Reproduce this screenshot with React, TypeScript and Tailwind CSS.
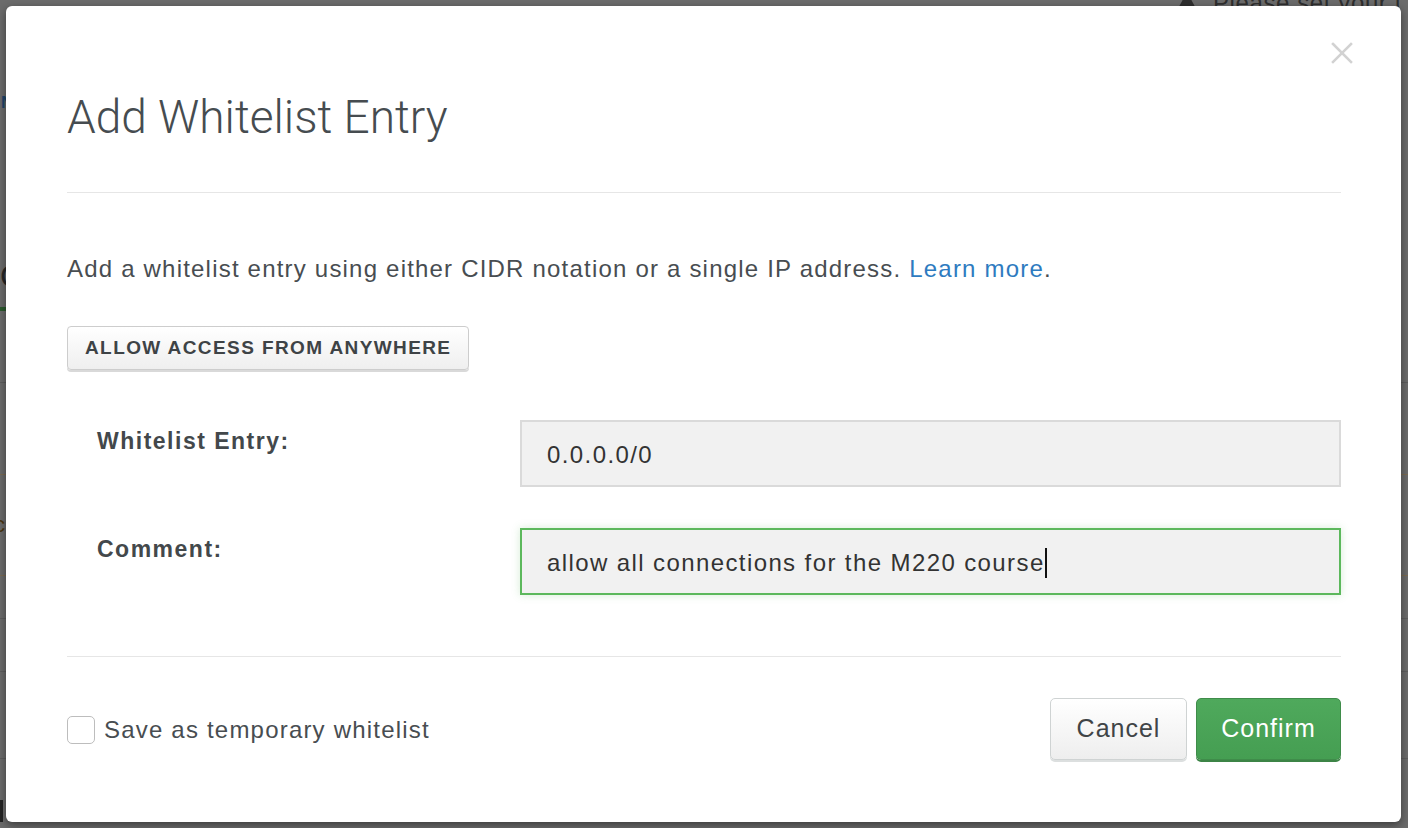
import { useState } from "react";

const font = "font-['Liberation_Sans','Helvetica_Neue',Arial,sans-serif]";

function CloseIcon() {
  return (
    <svg width="22" height="22" viewBox="0 0 22 22" fill="none" stroke="#d2d2d2" strokeWidth="2.6" strokeLinecap="square">
      <path d="M2 2 L20 20" />
      <path d="M20 2 L2 20" />
    </svg>
  );
}

function WarnIcon() {
  return (
    <svg width="24" height="22" viewBox="0 0 24 22" fill="#2e2e2e">
      <path d="M12 0 L24 22 L0 22 Z" />
    </svg>
  );
}

// dimmed page that sits behind the dialog; only its edges peek out
function BackdropPage() {
  const clip = "w-[6px] overflow-hidden whitespace-nowrap";
  return (
    <div className="flex w-full flex-col">
      <div className="flex h-[12px] items-start justify-end pr-[7px]">
        <div className="mt-[-8px]"><WarnIcon /></div>
        <span className="ml-[14px] mt-[-9px] w-[188px] overflow-hidden whitespace-nowrap text-[24px] leading-[24px] tracking-[0.6px] text-[#2e2e2e]">Please set your time zone</span>
      </div>
      <div className={`mt-[83px] h-[16px] pl-[1px] text-[17px] font-bold leading-[16px] text-[#1f446a] ${clip}`}>N</div>
      <div className={`mt-[150px] h-[30px] text-[32px] leading-[30px] text-[#262626] ${clip}`}>C</div>
      <div className="mt-[16px] h-[4px] w-[120px] bg-[#2c5a2e]" />
      <div className="mt-[71px] border-b border-[#5c5c5c]" />
      <div className="mt-[91px] h-[102px] border-y border-[#7a6a52] text-[22px] leading-[100px] text-[#4a3510]">
        <div className={clip}><span className="-ml-[6px]">c</span></div>
      </div>
      <div className="mt-[42px] border-b border-[#5d5d5d]" />
      <div className="mt-[52px] border-b border-[#5d5d5d]" />
      <div className="mt-[86px] border-b border-[#5d5d5d]" />
      <div className="mt-[41px] h-[22px] w-[3px] bg-[#232323]" />
    </div>
  );
}

export default function App() {
  const [entry] = useState("0.0.0.0/0");
  const [comment] = useState("allow all connections for the M220 course");

  return (
    <div className={`relative h-[828px] w-[1408px] overflow-hidden bg-[#6b6b6b] ${font}`}>
      <BackdropPage />

      <div className="absolute left-[6px] top-[6px] h-[816px] w-[1395px] rounded-[6px] bg-white pl-[61px] pr-[60px] shadow-[0_3px_9px_rgba(0,0,0,0.45)]">
        <button className="absolute right-[48px] top-[36px]">
          <CloseIcon />
        </button>

        <div className="h-[187px] border-b border-[#e6e6e6] pt-[85px]">
          <h1 className="font-['Roboto',sans-serif] text-[46px] font-light leading-[53px] text-[#464c50]">Add Whitelist Entry</h1>
        </div>

        <div className="border-b border-[#e6e6e6] pb-[61px] pt-[60px]">
          <p className="text-[24px] leading-[32px] tracking-[1.2px] text-[#484d51]">
            Add a whitelist entry using either CIDR notation or a single IP address.{" "}
            <a className="text-[#2e7bc0]">Learn more</a>.
          </p>

          <button className="mt-[41px] h-[44px] rounded-[4px] border border-[#cdcdcd] bg-gradient-to-b from-white to-[#efefef] px-[17px] text-[19px] font-bold tracking-[1.4px] text-[#3e4346] shadow-[0_2px_0_#d9d9d9]">
            ALLOW ACCESS FROM ANYWHERE
          </button>

          <div className="mt-[50px] flex flex-col gap-[41px]">
            <div className="flex">
              <label className="w-[453px] pl-[30px] pt-[6px] text-[23px] font-bold leading-[30px] tracking-[1.5px] text-[#43484b]">Whitelist Entry:</label>
              <div className="flex h-[67px] flex-1 items-center border-2 border-[#dadada] bg-[#f1f1f1] pl-[25px] pt-[3px] text-[24px] tracking-[1.4px] text-[#333]">
                {entry}
              </div>
            </div>
            <div className="flex">
              <label className="w-[453px] pl-[30px] pt-[6px] text-[23px] font-bold leading-[30px] tracking-[1.5px] text-[#43484b]">Comment:</label>
              <div className="flex h-[67px] flex-1 items-center border-2 border-[#5cb85c] bg-[#f1f1f1] pl-[25px] pt-[3px] text-[24px] tracking-[1.4px] text-[#333] shadow-[0_0_8px_rgba(92,184,92,0.25)]">
                {comment}
                <span className="h-[30px] w-[2px] bg-[#111]" />
              </div>
            </div>
          </div>
        </div>

        <div className="flex items-center justify-between pt-[41px]">
          <label className="flex items-center gap-[9px] pt-[2px] text-[24px] tracking-[1.2px] text-[#484d51]">
            <span className="h-[28px] w-[28px] rounded-[5px] border border-[#bdbdbd] bg-white" />
            Save as temporary whitelist
          </label>
          <div className="flex gap-[9px]">
            <button className="h-[62px] w-[137px] rounded-[5px] border border-[#cfd3d3] bg-gradient-to-b from-white to-[#eeeeee] text-[25px] tracking-[1px] text-[#3f4447] shadow-[0_2px_0_#dcdfdf]">
              Cancel
            </button>
            <button className="h-[62px] w-[145px] rounded-[5px] border border-[#3f8c4a] bg-gradient-to-b from-[#4fa95c] to-[#459e52] text-[25px] tracking-[1px] text-white shadow-[0_2px_0_#3c8446]">
              Confirm
            </button>
          </div>
        </div>
      </div>
    </div>
  );
}
